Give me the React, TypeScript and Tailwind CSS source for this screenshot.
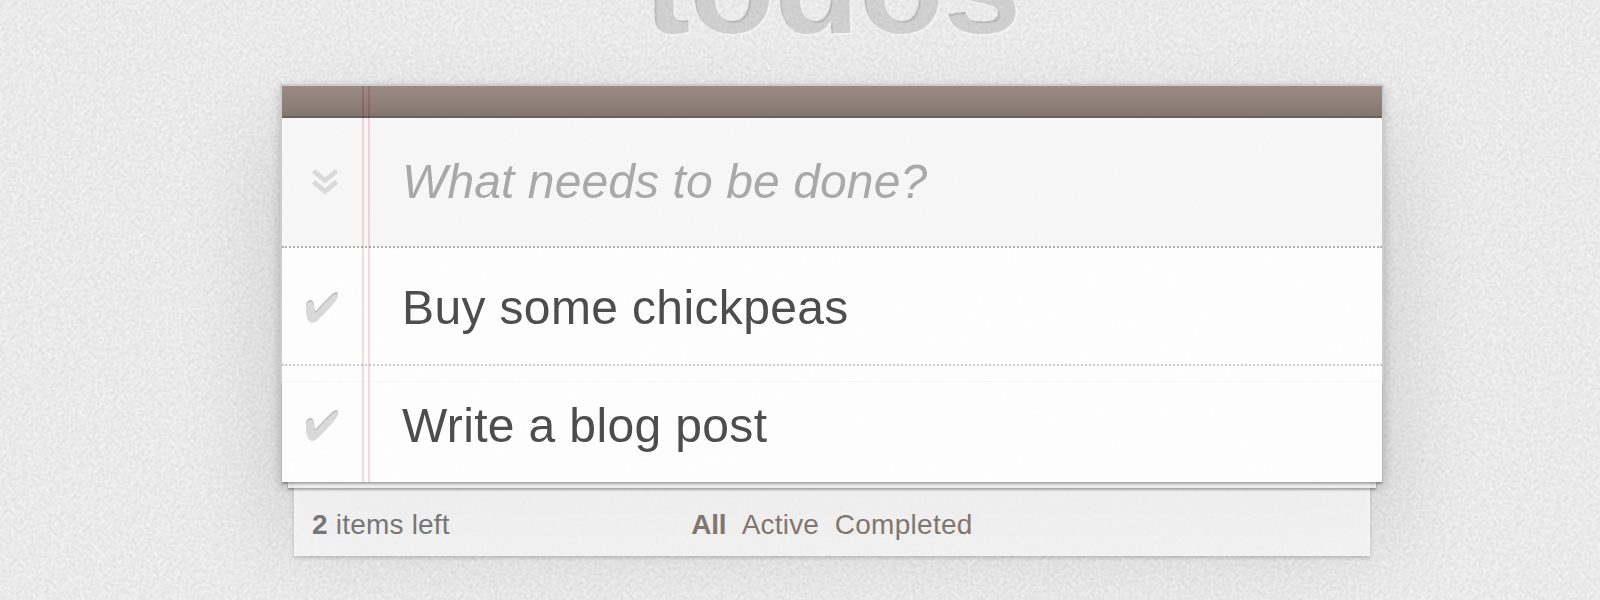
import React from "react";

const CHECK =
  "M0 17 C0 13.500 2 11 4.500 11 C7 11 7.600 13 8 16 L8.800 21.500 C9.200 22 9.800 21.800 10.400 21.200 C15 16.500 23 7.500 28 3.800 C30.500 2 32.200 3 31.800 6 C30.500 10 25 16 19 22 L11 30 C8.500 32.300 4.800 32.600 2.600 30 C0.700 27.500 0 22 0 17 Z";

function Check() {
  return (
    <svg className="ml-6 h-9 w-[34px] shrink-0" viewBox="0 -3 34 36">
      <path d={CHECK} fill="#bfbfbf" transform="translate(0 -2)" />
      <path d={CHECK} fill="#d9d9d9" />
    </svg>
  );
}

function Texture() {
  return (
    <svg className="absolute inset-0 h-full w-full" aria-hidden="true">
      <filter id="weave" x="0" y="0" width="100%" height="100%" colorInterpolationFilters="sRGB">
        <feTurbulence type="fractalNoise" baseFrequency="0.32" numOctaves={1} seed={4} />
        <feColorMatrix values="0.14 0 0 0 0.848  0.14 0 0 0 0.848  0.14 0 0 0 0.848  0 0 0 0 1" />
      </filter>
      <g transform="rotate(45 800 300)">
        <rect x="-100" y="-600" width="1800" height="1800" filter="url(#weave)" />
      </g>
    </svg>
  );
}

function Item({ title, last = false }: { title: string; last?: boolean }) {
  return (
    <li className={last ? "flex h-[116px] items-center" : "flex h-[118px] items-center border-b-2 border-dotted border-[#ccc]"}>
      <Check />
      <span className="ml-[62px] whitespace-nowrap pt-1 text-[48px] leading-[58px] tracking-[0.36px] text-[#4d4d4d]">{title}</span>
    </li>
  );
}

export default function App() {
  return (
    <div className="relative h-[600px] w-[1600px] overflow-hidden bg-[#eaeaea] font-['Liberation_Sans',Arial,sans-serif]">
      <Texture />
      <div className="relative isolate ml-[280px] w-[1104px]">
        <h1 className="-mt-[93px] h-[177px] pl-[4px] text-center text-[140px] font-bold leading-[160px] tracking-[-0.8px] text-white/30 [text-shadow:-2px_-2px_0_rgba(0,0,0,0.2)]">
          todos
        </h1>
        <main className="relative isolate rounded-t-[2px] border-2 border-b-0 border-[#ccc] bg-white/90 shadow-[0_4px_12px_rgba(0,0,0,0.2),0_50px_100px_rgba(0,0,0,0.14)]">
          <div className="h-8 border-b-2 border-[#6c615c] bg-linear-to-b from-[rgba(132,110,100,0.8)] to-[rgba(101,84,76,0.8)]" />
          <div className="flex h-32 items-center bg-black/[0.027]">
            <svg className="ml-[30px] h-[26px] w-[26px] shrink-0" viewBox="0 0 26 26" fill="none" stroke="#d9d9d9" strokeWidth="4.8">
              <path d="M1.500 2 L13 11.500 L24.500 2 M1.500 12.800 L13 22.300 L24.500 12.800" />
            </svg>
            <span className="ml-16 whitespace-nowrap text-[48px] italic tracking-[0.1px] text-[#a9a9a9]">What needs to be done?</span>
          </div>
          <ul className="border-t-2 border-dotted border-[#adadad]">
            <Item title="Buy some chickpeas" />
            <Item title="Write a blog post" last />
          </ul>
          <div className="absolute inset-y-0 left-20 w-2 border-x-2 border-[#f7d8d8] mix-blend-multiply" />
          <div className="absolute inset-x-0 bottom-0 -z-10 h-[101px] border-t border-black/[0.03] shadow-[0_2px_2px_rgba(0,0,0,0.3),0_12px_0_-6px_rgba(255,255,255,0.8),0_14px_2px_-6px_rgba(0,0,0,0.3),0_86px_0_-12px_rgba(255,255,255,0.8),0_88px_4px_-12px_rgba(0,0,0,0.2)]" />
        </main>
        <footer className="relative mx-8 mt-[23px] flex h-10 items-center text-[28px] text-[#777]">
          <span className="flex-1 whitespace-nowrap tracking-[0.2px]"><b>2</b> items left</span>
          <nav className="flex gap-[15.5px] text-[#83756f]">
            <b className="tracking-[-0.3px]">All</b>
            <span className="tracking-[0.2px]">Active</span>
            <span className="tracking-[0.3px]">Completed</span>
          </nav>
          <span className="flex-1" />
        </footer>
      </div>
    </div>
  );
}
